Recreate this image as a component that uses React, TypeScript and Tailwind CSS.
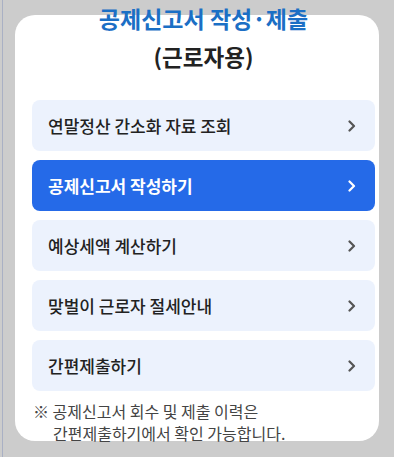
import React from "react";

const items = [
  { label: "연말정산 간소화 자료 조회", active: false },
  { label: "공제신고서 작성하기", active: true },
  { label: "예상세액 계산하기", active: false },
  { label: "맞벌이 근로자 절세안내", active: false },
  { label: "간편제출하기", active: false },
];

function Chevron({ color }: { color: string }) {
  return (
    <svg width="10" height="12" viewBox="0 0 10 12" fill="none">
      <path d="M2.5 1.5 L7 6 L2.5 10.5" stroke={color} strokeWidth="2.2" strokeLinecap="round" strokeLinejoin="round" />
    </svg>
  );
}

export default function App() {
  return (
    <div
      className="relative w-[394px] h-[457px] bg-[#cccccc] pt-[15px] pl-[15px] overflow-hidden"
      style={{ fontFamily: '"Noto Sans CJK KR", "Noto Sans", sans-serif' }}
    >
      <div className="absolute left-[2px] top-0 w-[1px] h-full bg-[#a9b0c4]" />
      <div className="w-[364px] h-[426px] bg-white rounded-[20px] pl-[17px] pr-[4px] flex flex-col">
        <div className="-mt-[12px] text-center text-[23px] leading-[30px] font-bold text-[#1b6fc5]">
          공제신고서 작성·제출
        </div>
        <div className="mt-[8px] text-center text-[22.5px] leading-[30px] font-bold text-[#222222]">
          (근로자용)
        </div>
        <div className="mt-[29px] flex flex-col gap-[9px]">
          {items.map((it) => (
            <div
              key={it.label}
              className={
                "h-[51px] rounded-[8px] flex items-center justify-between pl-[16px] pr-[18px] " +
                (it.active ? "bg-[#256ae8] text-white font-bold" : "bg-[#ecf2fd] text-[#222222] font-medium")
              }
            >
              <span className="text-[17px]">{it.label}</span>
              <Chevron color={it.active ? "#ffffff" : "#555555"} />
            </div>
          ))}
        </div>
        <div className="mt-[9px] pl-[21px] -indent-[20px] text-[16px] leading-[22px] text-[#444444]">
          ※ 공제신고서 회수 및 제출 이력은
          <br />
          간편제출하기에서 확인 가능합니다.
        </div>
      </div>
    </div>
  );
}
